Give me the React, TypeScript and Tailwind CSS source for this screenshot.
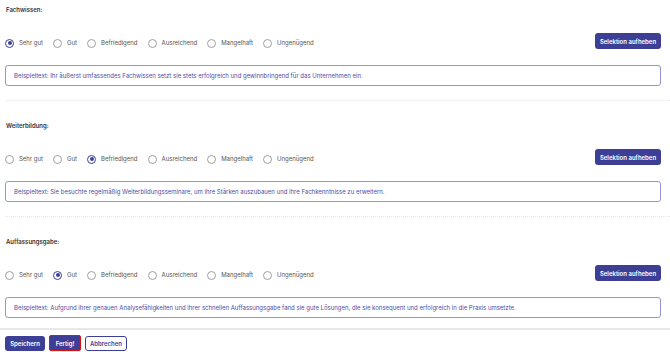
import { useState } from 'react'

const grades = ['Sehr gut', 'Gut', 'Befriedigend', 'Ausreichend', 'Mangelhaft', 'Ungenügend']

const sections = [
  {
    title: 'Fachwissen:',
    selected: 0,
    text: 'Beispieltext: Ihr äußerst umfassendes Fachwissen setzt sie stets erfolgreich und gewinnbringend für das Unternehmen ein.',
  },
  {
    title: 'Weiterbildung:',
    selected: 2,
    text: 'Beispieltext: Sie besuchte regelmäßig Weiterbildungsseminare, um ihre Stärken auszubauen und ihre Fachkenntnisse zu erweitern.',
  },
  {
    title: 'Auffassungsgabe:',
    selected: 1,
    text: 'Beispieltext: Aufgrund ihrer genauen Analysefähigkeiten und ihrer schnellen Auffassungsgabe fand sie gute Lösungen, die sie konsequent und erfolgreich in die Praxis umsetzte.',
  },
]

function Radio({ checked }: { checked: boolean }) {
  return (
    <span
      className={
        'flex h-[9px] w-[9px] shrink-0 items-center justify-center rounded-full border bg-white ' +
        (checked ? 'border-[#3d3f96]' : 'border-[#a0a0a0]')
      }
    >
      {checked && <span className="h-[4px] w-[4px] rounded-full bg-[#3d3f96]" />}
    </span>
  )
}

function Section({ title, selected, text, last }: { title: string; selected: number; text: string; last: boolean }) {
  const [value, setValue] = useState<number | null>(selected)
  return (
    <section className="pl-[5px]">
      <h3 className="pt-[6px] pl-[1px] text-[6px] leading-[8px] font-semibold text-[#333]">{title}</h3>
      <div className="mt-[19px] flex h-[16px] items-center justify-between pr-[9px]">
        <div className="mt-[4px] flex items-center gap-[10px]">
          {grades.map((g, i) => (
            <label key={g} className="flex items-center gap-[5px]" onClick={() => setValue(i)}>
              <Radio checked={value === i} />
              <span className="text-[6px] leading-[8px] text-[#555]">{g}</span>
            </label>
          ))}
        </div>
        <button
          onClick={() => setValue(null)}
          className="h-[16px] w-[66px] rounded-[3px] bg-[#3d3f96] text-[6px] font-semibold text-white"
        >
          Selektion aufheben
        </button>
      </div>
      <div className="mt-[16px] mr-[9px] flex h-[21px] items-center rounded-[3px] border border-[#9495d2] px-[8px] text-[6px] text-[#4c4da3]">
        {text}
      </div>
      {!last && <div className="mt-[14px] h-0 border-t border-dotted border-[#e6e6e6]" />}
      {!last && <div className="h-[15px]" />}
    </section>
  )
}

export default function App() {
  return (
    <div className="h-[352px] w-[670px] overflow-hidden bg-white font-['Inter',sans-serif]">
      {sections.map((s, i) => (
        <Section key={s.title} {...s} last={i === sections.length - 1} />
      ))}
      <footer className="mt-[10px] border-t-2 border-[#e8e8e8] px-[5px] pt-[5px]">
        <div className="flex items-center gap-[4px]">
          <button className="h-[15px] w-[40px] rounded-[3px] bg-[#3d3f96] text-[6px] font-semibold text-white">
            Speichern
          </button>
          <button className="h-[16px] w-[32px] rounded-[2px] border border-[#e01010] bg-[#3d3f96] text-[6px] font-semibold text-white">
            Fertig!
          </button>
          <button className="h-[15px] w-[42px] rounded-[3px] border border-[#3d3f96] bg-white text-[6px] font-semibold text-[#3d3f96]">
            Abbrechen
          </button>
        </div>
      </footer>
    </div>
  )
}
